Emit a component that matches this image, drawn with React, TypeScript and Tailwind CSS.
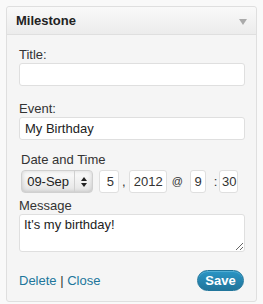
export default function App() {
  return (
    <div className="min-h-screen bg-[#f9f9f9] pt-[6px] px-[6px] font-['Liberation_Sans',Arial,sans-serif] text-[13px] text-[#333]">
      <div className="w-[251px] rounded-[3px] border border-[#dfdfdf] bg-[#f5f5f5]">
        <div className="flex h-[28px] items-center justify-between rounded-t-[3px] border-b border-[#dfdfdf] bg-gradient-to-b from-[#f9f9f9] to-[#ececec] pl-[9px] pr-[9px]">
          <span className="font-bold text-[#222]">Milestone</span>
          <span className="mt-[2px] h-0 w-0 border-x-[4px] border-t-[6px] border-x-transparent border-t-[#aaa]" />
        </div>

        <div className="px-[12px] pt-[12px] pb-[10px]">
          <div className="leading-[16px]">Title:</div>
          <input className="h-[23px] w-[226px] rounded-[3px] border border-[#dfdfdf] bg-white px-[5px] outline-none" />

          <div className="mt-[15px] leading-[16px]">Event:</div>
          <input
            defaultValue="My Birthday"
            className="h-[23px] w-[226px] rounded-[3px] border border-[#dfdfdf] bg-white px-[5px] text-[#222] outline-none"
          />

          <div className="mt-[12px] pl-[2px] leading-[16px]">Date and Time</div>
          <div className="mt-[2px] flex h-[23px] items-center pl-[2px]">
            <div className="flex h-[23px] w-[72px] items-center rounded-[4px] border border-[#d0d0d0] bg-gradient-to-b from-[#fdfdfd] to-[#e4e4e4] shadow-[inset_0_0_4px_rgba(0,0,0,0.18)]">
              <span className="w-[53px] text-center text-[#222]">09-Sep</span>
              <span className="flex h-full w-[18px] items-center justify-center border-l border-[#d0d0d0]">
                <svg width="6" height="10" viewBox="0 0 6 10">
                  <path d="M3 0L6 4H0Z" fill="#222" />
                  <path d="M3 10L6 6H0Z" fill="#222" />
                </svg>
              </span>
            </div>
            <div className="ml-[6px] flex h-[23px] w-[20px] items-center justify-end rounded-[3px] border border-[#dfdfdf] bg-white pr-[4px]">5</div>
            <span className="mx-[3px]">,</span>
            <div className="flex h-[23px] w-[38px] items-center justify-end rounded-[3px] border border-[#dfdfdf] bg-white pr-[3px]">2012</div>
            <span className="ml-[5px] mr-[7px] text-[11px]">@</span>
            <div className="flex h-[23px] w-[16px] items-center justify-end rounded-[3px] border border-[#dfdfdf] bg-white pr-[3px]">9</div>
            <span className="ml-[8px] mr-[2px]">:</span>
            <div className="flex h-[23px] w-[19px] items-center justify-end rounded-[3px] border border-[#dfdfdf] bg-white pr-[1px]">30</div>
          </div>

          <div className="mt-[5px] leading-[16px]">Message</div>
          <textarea
            defaultValue="It's my birthday!"
            className="block h-[38px] w-[226px] resize-y rounded-[3px] border border-[#dfdfdf] bg-white px-[4px] py-[2px] leading-[16px] text-[#222] outline-none"
          />

          <div className="mt-[18px] flex items-center justify-between">
            <div className="text-[#21759b]">
              <a href="#" className="text-[#21759b]">Delete</a>
              <span className="text-[#333]"> | </span>
              <a href="#" className="text-[#21759b]">Close</a>
            </div>
            <button className="h-[21px] w-[47px] rounded-full border border-[#21759b] bg-gradient-to-b from-[#2a95c5] to-[#21759b] text-[13px] font-bold text-white shadow-[inset_0_1px_0_rgba(120,200,230,0.5)]">
              Save
            </button>
          </div>
        </div>
      </div>
    </div>
  );
}
